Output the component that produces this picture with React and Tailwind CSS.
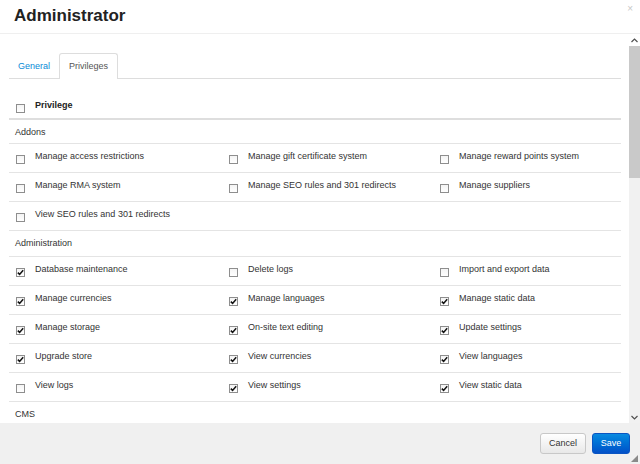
const addons = [
  [
    { label: "Manage access restrictions", checked: false },
    { label: "Manage gift certificate system", checked: false },
    { label: "Manage reward points system", checked: false },
  ],
  [
    { label: "Manage RMA system", checked: false },
    { label: "Manage SEO rules and 301 redirects", checked: false },
    { label: "Manage suppliers", checked: false },
  ],
  [{ label: "View SEO rules and 301 redirects", checked: false }],
];

const administration = [
  [
    { label: "Database maintenance", checked: true },
    { label: "Delete logs", checked: false },
    { label: "Import and export data", checked: false },
  ],
  [
    { label: "Manage currencies", checked: true },
    { label: "Manage languages", checked: true },
    { label: "Manage static data", checked: true },
  ],
  [
    { label: "Manage storage", checked: true },
    { label: "On-site text editing", checked: true },
    { label: "Update settings", checked: true },
  ],
  [
    { label: "Upgrade store", checked: true },
    { label: "View currencies", checked: true },
    { label: "View languages", checked: true },
  ],
  [
    { label: "View logs", checked: false },
    { label: "View settings", checked: true },
    { label: "View static data", checked: true },
  ],
];

const colWidths = ["w-[213px]", "w-[211px]", "flex-1"];

const Checkbox = ({ checked }) => (
  <span className="mt-[5px] flex h-[9px] w-[9px] shrink-0 items-center justify-center border border-[#8e8e8e] bg-gradient-to-b from-[#f4f4f4] to-white">
    {checked && (
      <svg width="7" height="7" viewBox="0 0 7 7">
        <path d="M0.8 3.6 L2.6 5.4 L6.2 1.2" fill="none" stroke="#111" strokeWidth="1.5" />
      </svg>
    )}
  </span>
);

const Row = ({ items }) => (
  <div className="flex h-[29px] border-b border-[#e4e4e4]">
    {items.map((item, i) => (
      <div key={i} className={`${colWidths[i]} flex items-start gap-[10px] pl-[7px] pt-[6px]`}>
        <Checkbox checked={item.checked} />
        <span className="leading-[12px] text-[#333]">{item.label}</span>
      </div>
    ))}
  </div>
);

const Section = ({ title, h }) => (
  <div className={`${h} border-b border-[#e4e4e4] pl-[6px] pt-[6px] leading-[12px] text-[#333]`}>
    {title}
  </div>
);

export default function App() {
  return (
    <div
      className="flex h-[464px] w-[640px] flex-col overflow-hidden bg-white text-[9px]"
      style={{ fontFamily: '"Liberation Sans", Arial, sans-serif' }}
    >
      {/* header */}
      <div className="flex h-[34px] shrink-0 items-start justify-between border-b border-[#efefef] pl-[14px] pr-[7px]">
        <h1 className="mt-[5px] text-[17px] font-bold leading-[22px] text-[#222]">Administrator</h1>
        <span className="mt-[4px] text-[10px] leading-[10px] text-[#c8c8c8]">×</span>
      </div>

      {/* body */}
      <div className="flex h-[389px] shrink-0">
        <div className="flex-1 overflow-hidden pl-[9px] pr-[8px] pt-[19px]">
          {/* tabs */}
          <div className="flex h-[26px] border-b border-[#dddddd]">
            <div className="px-[9px] pt-[7px] leading-[12px] text-[#0a8ad6]">General</div>
            <div className="-mb-px rounded-t-[3px] border border-b-0 border-[#dddddd] bg-white px-[9px] pt-[6px] leading-[12px] text-[#555]">
              Privileges
            </div>
          </div>

          {/* table */}
          <div className="mt-[13px]">
            <div className="flex h-[28px] border-b-2 border-[#dedede]">
              <div className="flex items-start gap-[10px] pl-[7px] pt-[7px]">
                <Checkbox checked={false} />
                <span className="font-bold leading-[12px] text-[#222]">Privilege</span>
              </div>
            </div>

            <Section title="Addons" h="h-[24px]" />
            {addons.map((items, i) => (
              <Row key={i} items={items} />
            ))}

            <Section title="Administration" h="h-[26px]" />
            {administration.map((items, i) => (
              <Row key={i} items={items} />
            ))}

            <Section title="CMS" h="h-[26px]" />
          </div>
        </div>

        {/* scrollbar */}
        <div className="flex w-[11px] shrink-0 flex-col bg-[#f1f1f1]">
          <div className="flex h-[12px] items-center justify-center bg-white">
            <svg width="7" height="5" viewBox="0 0 7 5">
              <path d="M0.5 4 L3.5 1 L6.5 4" fill="none" stroke="#505050" strokeWidth="1.2" />
            </svg>
          </div>
          <div className="h-[132px] bg-[#c9c9c9]" />
          <div className="flex-1" />
          <div className="flex h-[12px] items-center justify-center">
            <svg width="7" height="5" viewBox="0 0 7 5">
              <path d="M0.5 1 L3.5 4 L6.5 1" fill="none" stroke="#505050" strokeWidth="1.2" />
            </svg>
          </div>
        </div>
      </div>

      {/* footer */}
      <div className="relative flex flex-1 items-start justify-end gap-[6px] bg-[#f0f0f0] pr-[10px] pt-[10px]">
        <button className="h-[21px] w-[46px] rounded-[3px] border border-[#c8c8c8] bg-gradient-to-b from-white to-[#e8e8e8] text-[9px] text-[#333]">
          Cancel
        </button>
        <button className="h-[21px] w-[38px] rounded-[3px] border border-[#0a55c2] bg-gradient-to-b from-[#0a8ae0] to-[#0450c8] text-[9px] text-white">
          Save
        </button>
        <svg className="absolute bottom-[2px] right-[2px]" width="7" height="7" viewBox="0 0 7 7">
          <path d="M7 0 L7 7 L0 7 Z" fill="#8a8a8a" />
        </svg>
      </div>
    </div>
  );
}
